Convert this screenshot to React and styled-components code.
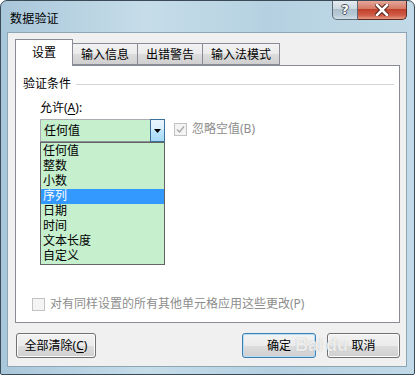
import React from "react";
import styled, { createGlobalStyle } from "styled-components";

const Global = createGlobalStyle`
  html, body { margin: 0; padding: 0; background: #ffffff; }
  body { font-family: "Noto Sans", "Noto Sans CJK SC", sans-serif; font-size: 12px; }
`;

const Window = styled.div`
  position: relative;
  box-sizing: border-box;
  width: 415px;
  height: 375px;
  border: 1px solid #3b4a57;
  border-radius: 7px 7px 2px 2px;
  background: linear-gradient(to right, #a9c7da 0%, #c6dde9 35%, #b5d1e1 65%, #c2dae7 100%);
  display: flex;
  flex-direction: column;
  padding: 0 7px 7px 6px;
  overflow: hidden;
`;

const TitleBar = styled.div`
  height: 31px;
  display: flex;
  align-items: flex-start;
  flex-shrink: 0;
`;

const Title = styled.div`
  margin: 10px 0 0 3px;
  font-size: 12px;
  line-height: 16px;
  color: #000;
  letter-spacing: 0.2px;
`;

const Caption = styled.div`
  margin-left: auto;
  margin-top: -1px;
  display: flex;
  height: 20px;
`;

const CapBtn = styled.div`
  box-sizing: border-box;
  width: ${(p) => p.$w}px;
  height: 20px;
  display: flex;
  align-items: center;
  justify-content: center;
  border: 1px solid ${(p) => (p.$close ? "#5b2a22" : "#5d6b78")};
  border-top: none;
  border-left-width: ${(p) => (p.$close ? 0 : 1)}px;
  border-radius: ${(p) => (p.$close ? "0 0 5px 0" : "0 0 0 5px")};
  background: ${(p) =>
    p.$close
      ? "linear-gradient(#e6ada0 0%, #d67a68 45%, #c2412b 50%, #cf5c47 80%, #e79a83 100%)"
      : "linear-gradient(#e8eef3 0%, #cdd8e1 45%, #aebfcd 50%, #b9cad7 80%, #d3e0ea 100%)"};
`;

const QMark = styled.span`
  font-family: "DejaVu Sans", sans-serif;
  font-weight: bold;
  font-size: 13px;
  line-height: 13px;
  color: #fff;
  text-shadow: -1px 0 #4a5560, 1px 0 #4a5560, 0 -1px #4a5560, 0 1px #4a5560;
`;

const Content = styled.div`
  flex: 1;
  box-sizing: border-box;
  border: 1px solid #8ea5b6;
  background: #f0f0f0;
  padding: 6px 6px 0 7px;
  display: flex;
  flex-direction: column;
`;

const Tabs = styled.div`
  display: flex;
  align-items: flex-end;
  height: 26px;
  position: relative;
  z-index: 1;
`;

const Tab = styled.div`
  box-sizing: border-box;
  height: ${(p) => (p.$active ? 27 : 22)}px;
  margin-bottom: ${(p) => (p.$active ? -1 : 0)}px;
  padding: 0 ${(p) => p.$pad}px;
  border: 1px solid #898c95;
  border-bottom: ${(p) => (p.$active ? "none" : "1px solid #898c95")};
  border-left-width: ${(p) => (p.$active ? 1 : 0)}px;
  background: ${(p) => (p.$active ? "#ffffff" : "linear-gradient(#f2f2f2, #ebebeb 50%, #dddddd 51%, #cfcfcf)")};
  display: flex;
  align-items: center;
  justify-content: center;
  font-size: 12px;
  line-height: 14px;
  padding-top: ${(p) => (p.$active ? 0 : 1)}px;
  color: #000;
`;

const Panel = styled.div`
  box-sizing: border-box;
  height: 258px;
  border: 1px solid #898c95;
  background: #ffffff;
  display: flex;
  flex-direction: column;
  padding: 11px 0 11px 7px;
`;

const GroupHead = styled.div`
  display: flex;
  align-items: center;
  font-size: 12px;
  line-height: 14px;
  color: #000;
`;

const GroupLine = styled.div`
  flex: 1;
  height: 1px;
  background: #d5d5d5;
  margin: 1px 5px 0 5px;
`;

const Allow = styled.div`
  margin: 10px 0 0 17px;
  display: flex;
  flex-direction: column;
`;

const Label = styled.div`
  font-size: 12px;
  line-height: 14px;
  color: #000;
`;

const U = styled.span`
  text-decoration: underline;
  text-underline-offset: 2px;
`;

const Row = styled.div`
  display: flex;
  align-items: flex-start;
  margin-top: 4px;
`;

const ComboWrap = styled.div`
  position: relative;
  width: 125px;
`;

const Combo = styled.div`
  box-sizing: border-box;
  height: 23px;
  border: 1px solid #abadb3;
  border-bottom-color: #8a8e96;
  background: #c6efce;
  display: flex;
  align-items: center;
  padding-left: 3px;
  font-size: 12px;
  line-height: 14px;
`;

const DropBtn = styled.div`
  box-sizing: border-box;
  margin-left: auto;
  width: 15px;
  height: 23px;
  margin-right: -1px;
  border: 1px solid #3c6f99;
  background: linear-gradient(#eaf6fd 0%, #d9f0fc 45%, #bee6fd 50%, #a7d9f5 100%);
  display: flex;
  align-items: center;
  justify-content: center;
`;

const List = styled.div`
  position: absolute;
  left: 0;
  top: 23px;
  width: 125px;
  box-sizing: border-box;
  border: 1px solid #646464;
  background: #c6efce;
  display: flex;
  flex-direction: column;
  padding: 1px 0 0;
  z-index: 2;
`;

const Item = styled.div`
  height: 15px;
  line-height: 15px;
  font-family: "Liberation Sans", "Noto Sans CJK SC", sans-serif;
  font-size: 12px;
  padding-left: 2px;
  overflow: hidden;
  color: ${(p) => (p.$sel ? "#ffffff" : "#000")};
  background: ${(p) => (p.$sel ? "#3399ff" : "transparent")};
`;

const Check = styled.label`
  display: flex;
  align-items: center;
  gap: 5px;
  margin: ${(p) => p.$m};
  font-size: 12px;
  line-height: 14px;
  color: #8d8d8d;
`;

const Box = styled.span`
  box-sizing: border-box;
  width: 13px;
  height: 13px;
  border: 1px solid #c2c2c2;
  background: #f4f4f4;
  display: flex;
  align-items: center;
  justify-content: center;
  flex-shrink: 0;
`;

const Spacer = styled.div`
  flex: 1;
`;

const Buttons = styled.div`
  display: flex;
  align-items: center;
  margin-top: 10px;
  padding-left: 1px;
  gap: 11px;
`;

const Btn = styled.div`
  box-sizing: border-box;
  width: ${(p) => p.$w}px;
  height: 25px;
  border: 1px solid ${(p) => (p.$focus ? "#3c7fb1" : "#707070")};
  border-radius: 3px;
  background: ${(p) =>
    p.$focus
      ? "linear-gradient(#eaf6fd 0%, #f2f2f2 10%, #ebebeb 50%, #dddddd 51%, #cfcfcf 100%)"
      : "linear-gradient(#f2f2f2 0%, #ebebeb 50%, #dddddd 51%, #cfcfcf 100%)"};
  box-shadow: ${(p) => (p.$focus ? "inset 0 0 0 1px #b8def5" : "inset 0 0 0 1px #fcfcfc")};
  display: flex;
  align-items: center;
  justify-content: center;
  font-size: 12px;
  line-height: 14px;
  color: #000;
  margin-left: ${(p) => (p.$push ? "auto" : "0")};
`;

const Watermark = styled.div`
  position: absolute;
  left: 294px;
  top: 334px;
  display: flex;
  align-items: flex-end;
  gap: 3px;
  font-family: "Liberation Sans", sans-serif;
  font-weight: bold;
  font-size: 18px;
  line-height: 20px;
  color: rgba(255, 255, 255, 0.8);
  text-shadow: 0 0 1px rgba(110, 110, 110, 0.5);
  pointer-events: none;
`;

const items = ["任何值", "整数", "小数", "序列", "日期", "时间", "文本长度", "自定义"];

export default function App() {
  return (
    <>
      <Global />
      <Window>
        <TitleBar>
          <Title>数据验证</Title>
          <Caption>
            <CapBtn $w={26}>
              <QMark>?</QMark>
            </CapBtn>
            <CapBtn $w={49} $close>
              <svg width="14" height="12" viewBox="0 0 14 12">
                <path d="M2 1 L12 11 M12 1 L2 11" stroke="#4a1a12" strokeWidth="4.5" strokeLinecap="square" />
                <path d="M2 1 L12 11 M12 1 L2 11" stroke="#ffffff" strokeWidth="2.6" strokeLinecap="square" />
              </svg>
            </CapBtn>
          </Caption>
        </TitleBar>
        <Content>
          <Tabs>
            <Tab $active $pad={16}>设置</Tab>
            <Tab $pad={8}>输入信息</Tab>
            <Tab $pad={8}>出错警告</Tab>
            <Tab $pad={8}>输入法模式</Tab>
          </Tabs>
          <Panel>
            <GroupHead>
              验证条件
              <GroupLine />
            </GroupHead>
            <Allow>
              <Label>
                允许(<U>A</U>):
              </Label>
              <Row>
                <ComboWrap>
                  <Combo>
                    任何值
                    <DropBtn>
                      <svg width="7" height="4" viewBox="0 0 7 4">
                        <path d="M0 0 H7 L3.5 4 Z" fill="#000" />
                      </svg>
                    </DropBtn>
                  </Combo>
                  <List>
                    {items.map((t) => (
                      <Item key={t} $sel={t === "序列"}>
                        {t}
                      </Item>
                    ))}
                  </List>
                </ComboWrap>
                <Check $m="3px 0 0 9px">
                  <Box>
                    <svg width="9" height="9" viewBox="0 0 9 9">
                      <path d="M1 4.5 L3.5 7 L8 1.5" fill="none" stroke="#a8a8a8" strokeWidth="1.4" />
                    </svg>
                  </Box>
                  忽略空值(B)
                </Check>
              </Row>
            </Allow>
            <Spacer />
            <Check $m="0 0 0 9px">
              <Box />
              对有同样设置的所有其他单元格应用这些更改(P)
            </Check>
          </Panel>
          <Buttons>
            <Btn $w={80}>
              全部清除(<U>C</U>)
            </Btn>
            <Btn $w={74} $focus $push>
              确定
            </Btn>
            <Btn $w={73}>取消</Btn>
          </Buttons>
        </Content>
        <Watermark>
          Bai<span>du</span>
        </Watermark>
      </Window>
    </>
  );
}
